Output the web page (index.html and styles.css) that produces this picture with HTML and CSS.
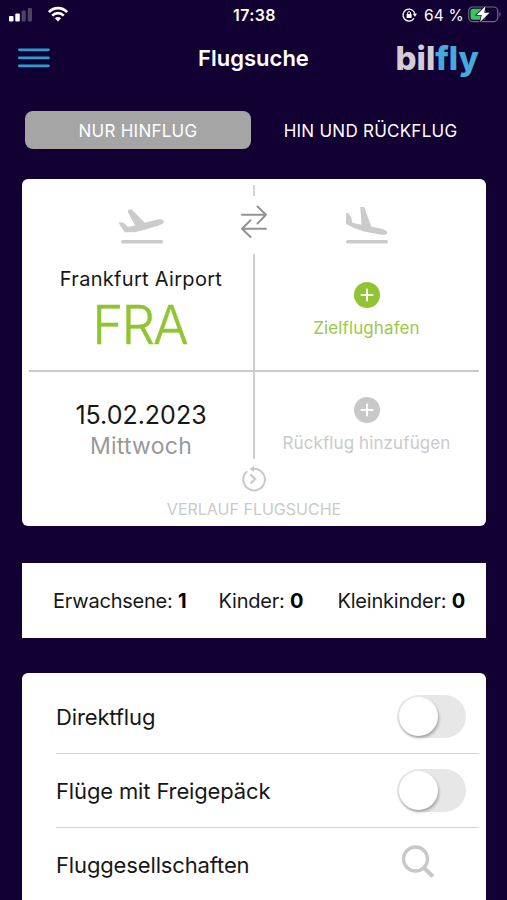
FILE: index.html
```html
<!DOCTYPE html>
<html lang="de">
<head>
<meta charset="utf-8">
<title>Flugsuche</title>
<link rel="stylesheet" href="styles.css">
</head>
<body>
<div class="app">
  <div class="status">
    <div class="status-left">
      <svg width="24" height="16" viewBox="0 0 24 16" fill="#fff"><rect x="0" y="9" width="4.500" height="5.500" rx="1"/><rect x="6.300" y="6.500" width="4.500" height="8" rx="1"/><g opacity=".25"><rect x="12.600" y="3.500" width="4.200" height="11" rx="1"/><rect x="18.800" y="1" width="4.200" height="13.500" rx="1"/></g></svg>
      <svg width="20" height="16" viewBox="0 0 20 16" fill="none" stroke="#fff" stroke-width="2.700"><path d="M.9 5.100C6-.3 14-.3 19.100 5.100"/><path d="M4.200 8.600C7.500 5.400 12.500 5.400 15.800 8.600"/><path d="M10 14.500 6.900 11.300C8.700 9.700 11.300 9.700 13.100 11.300Z" fill="#fff" stroke="none"/></svg>
    </div>
    <div class="clock">17:38</div>
    <div class="status-right">
      <svg width="15" height="14" viewBox="0 0 15 14" fill="none" stroke="#fff" stroke-width="1.300"><path d="M12.900 6A6 6 0 1 0 12 10.400"/><path d="M10.800 5.800h4.200l-2.100 3z" fill="#fff" stroke="none"/><path d="M5.700 6.500V5a1.400 1.400 0 0 1 2.800 0v1.500" stroke-width="1"/><rect x="4.600" y="6" width="5" height="4" rx=".6" fill="#fff" stroke="none"/></svg>
      <span class="percent">64 %</span>
      <svg class="battery" width="34" height="18" viewBox="0 0 34 18"><rect x=".7" y="1" width="29" height="14.600" rx="4" fill="none" stroke="#fff" stroke-opacity=".4" stroke-width="1.200"/><rect x="2.500" y="2.800" width="15" height="11" rx="2.500" fill="#35c759"/><path d="M31.300 5.600c1.600.7 1.600 4.700 0 5.400z" fill="#fff" fill-opacity=".4"/><path d="M17.600 0 8.600 8.900h5.200L12.100 16l9.400-9.200h-5.300z" fill="#fff" stroke="#130033" stroke-width="1.400" paint-order="stroke"/></svg>
    </div>
  </div>
  <header class="nav">
    <svg width="32" height="20" viewBox="0 0 32 20" stroke="#2e9bd0" stroke-width="2.800" stroke-linecap="round"><path d="M1.400 1.800h29M1.400 9.900h29M1.400 17.900h29"/></svg>
    <h1 class="title">Flugsuche</h1>
    <div class="logo">bil<span class="logo-fly">fly</span></div>
  </header>
  <div class="tabs">
    <button class="tab active">NUR HINFLUG</button>
    <button class="tab return">HIN UND RÜCKFLUG</button>
  </div>
  <section class="card route">
    <div class="cell origin">
      <svg class="plane" width="50" height="38" viewBox="0 0 50 38" fill="#cbcbcb"><path d="M2.200 17.100Q1.200 15.200 3 15.200L6.500 15.800 11 20.100 18 18.600 11 5.300Q10.200 3.300 12.200 2.500L14.600 2.300 27.800 15.800 40.500 12.500Q46.200 11.500 47 14.300 46.800 17 41 18.800L24 23.800 17.500 25.300 7.800 25.300Z"/><rect x="4" y="33" width="42" height="3.600" rx="1.600"/></svg>
      <div class="airport">Frankfurt Airport</div>
      <div class="code">FRA</div>
    </div>
    <div class="cell destination">
      <svg class="plane" width="50" height="38" viewBox="0 0 50 38" fill="#cbcbcb"><path d="M4 6.200 6 5.900 9.200 10 10.200 15.700 19.500 17.700 18.300.3 21.400-.2Q22.400.3 23 2L29.200 19.500 40.500 22Q46 24 45.300 26.300 43.500 28.500 38 27.600L22 24.500 12 21 4.800 17.200Q4 16.700 4 16Z"/><rect x="4" y="33" width="42" height="3.600" rx="1.600"/></svg>
      <svg class="plus" width="26" height="26" viewBox="0 0 26 26"><circle cx="13" cy="13" r="13" fill="#90c432"/><path d="M7.500 13h11M13 7.500v11" stroke="#fff" stroke-width="2" stroke-linecap="round"/></svg>
      <div class="label">Zielflughafen</div>
    </div>
    <div class="rule"></div>
    <div class="spine">
      <i class="stub"></i>
      <svg width="28" height="34" viewBox="0 0 28 34" fill="none" stroke="#949494" stroke-width="2" stroke-linecap="round" stroke-linejoin="round"><path d="M2 9.700H26M17.500 1.500 26 9.700 17.500 18.500M26 23.700H2M10.500 15.200 2 23.700 10.500 32"/></svg>
      <i class="stem"></i>
    </div>
    <div class="cell departure">
      <div class="date">15.02.2023</div>
      <div class="weekday">Mittwoch</div>
    </div>
    <div class="cell add-return">
      <svg class="plus" width="26" height="26" viewBox="0 0 26 26"><circle cx="13" cy="13" r="13" fill="#c8c8c8"/><path d="M7.500 13h11M13 7.500v11" stroke="#fff" stroke-width="2" stroke-linecap="round"/></svg>
      <div class="label">Rückflug hinzufügen</div>
    </div>
    <div class="history">
      <svg width="26" height="26" viewBox="0 0 26 26" fill="none" stroke="#c8c8c8" stroke-width="2"><path d="M11 3A10.800 10.800 0 1 1 6.300 5.200"/><path d="M13 0v6L8.500 3z" fill="#c8c8c8" stroke="none"/><path d="M9.500 8.300 14 13 9.500 17.500"/></svg>
      <div class="history-text">VERLAUF FLUGSUCHE</div>
    </div>
  </section>
  <section class="passengers">
    <div class="adults">Erwachsene: <b>1</b></div>
    <div class="children">Kinder: <b>0</b></div>
    <div class="infants">Kleinkinder: <b>0</b></div>
  </section>
  <section class="card options">
    <div class="option"><span>Direktflug</span><i class="switch"></i></div>
    <div class="option"><span>Flüge mit Freigepäck</span><i class="switch"></i></div>
    <div class="option"><span>Fluggesellschaften</span><svg class="search" width="34" height="34" viewBox="0 0 34 34" fill="none" stroke="#c8c8c8"><circle cx="14.500" cy="14" r="12" stroke-width="3.300"/><path d="M23 23 32 31.500" stroke-width="4"/></svg></div>
  </section>
</div>
</body>
</html>
```
FILE: styles.css
```css
* { box-sizing: border-box; }
body { margin: 0; background: #130033; font-family: Inter, "Liberation Sans", sans-serif; color: #171717; }
svg { display: block; flex: none; overflow: visible; }
.app { height: 900px; overflow: hidden; white-space: nowrap; }
.status { height: 30px; display: grid; grid-template-columns: 1fr auto 1fr; align-items: center; padding: 0 5px 0 9px; color: #fff; }
.status-left { display: flex; gap: 15px; }
.clock { font-size: 16px; font-weight: 600; letter-spacing: .4px; margin-left: -2px; }
.status-right { display: flex; align-items: center; justify-content: flex-end; }
.percent { font-size: 15.5px; letter-spacing: .2px; margin: 0 4px 0 7px; }
.nav { height: 56px; display: grid; grid-template-columns: 1fr auto 1fr; align-items: center; padding: 0 18px; }
.title { margin: 0; font-size: 22px; font-weight: 600; color: #fff; }
.logo { justify-self: end; margin-right: 10px; font-size: 33px; line-height: 38px; font-weight: 800; letter-spacing: 0; color: #d3ccd7; }
.logo-fly { color: #45a9dc; }
.tabs { margin: 25px 22px 0 25px; display: grid; grid-template-columns: 226px 1fr; gap: 2px; height: 38px; }
.tab { border: 0; padding: 1px 0 0; border-radius: 8px; background: none; color: #fff; font: 400 17px Inter, sans-serif; letter-spacing: .25px; }
.return { padding-left: 3px; }
.active { background: #a5a5a5; }
.card { margin: 30px 21px 0 22px; background: #fff; border-radius: 6px; }
.route { height: 347px; padding: 0 7px; display: grid; grid-template-columns: 1fr 28px 1fr; grid-template-rows: 191px 2px 87px 1fr; }
.cell { display: flex; flex-direction: column; align-items: center; }
.origin, .departure { padding-left: 13px; }
.destination, .add-return { padding-right: 14px; }
.origin { grid-area: 1 / 1; padding-top: 28px; }
.destination { grid-area: 1 / 3; padding-top: 28px; }
.plane { margin-left: 1px; }
.rule { grid-area: 2 / 1 / 3 / 4; background: #cacaca; }
.spine { grid-area: 1 / 2 / 4 / 3; display: flex; flex-direction: column; align-items: center; }
.stub { width: 2px; height: 11px; background: #d4d4d4; margin: 6px 0 9px; }
.stem { width: 2px; height: 205px; background: #cfcfcf; margin-top: 15px; }
.airport { margin-top: 20px; font-size: 20px; line-height: 28px; letter-spacing: .3px; }
.code { font-size: 53px; line-height: 65px; font-weight: 300; letter-spacing: -2px; margin-left: -3px; -webkit-text-stroke: .4px #90c432; color: #90c432; }
.destination .plus { margin-top: 37px; }
.destination .label { color: #9aca46; }
.label { font-size: 17px; line-height: 24px; margin-top: 8px; letter-spacing: .1px; }
.departure { grid-area: 3 / 1; padding-top: 27px; }
.date { font-size: 25px; line-height: 32px; }
.weekday { font-size: 23px; line-height: 30px; letter-spacing: .25px; color: #999; }
.add-return { grid-area: 3 / 3; padding-top: 25px; color: #cacaca; }
.history { grid-area: 4 / 1 / 5 / 4; display: flex; flex-direction: column; align-items: center; padding-top: 7px; }
.history-text { margin-top: 6px; font-size: 16px; line-height: 22px; color: #cacaca; }
.passengers { height: 75px; margin: 37px 21px 0 22px; padding: 0 21px 0 31px; background: #fff; display: flex; align-items: center; justify-content: space-between; font-size: 20px; letter-spacing: -.22px; }
.passengers b { color: #000; }
.children { margin-left: -2px; }
.options { margin-top: 35px; padding: 7px 7px 0 34px; height: 240px; }
.option { height: 74px; border-bottom: 1px solid #d5d5d5; padding-right: 13px; display: flex; align-items: center; justify-content: space-between; font-size: 22px; letter-spacing: -.14px; }
.option:last-child { border: 0; }
.switch { width: 69px; height: 43px; border-radius: 22px; background: #e7e7e7; padding: 1.500px; }
.switch::before { content: ""; display: block; width: 39px; height: 39px; border-radius: 50%; background: #fff; box-shadow: 1px 2px 3px rgba(0,0,0,.3); }
.search { margin: -6px 31px 0 0; }
```
